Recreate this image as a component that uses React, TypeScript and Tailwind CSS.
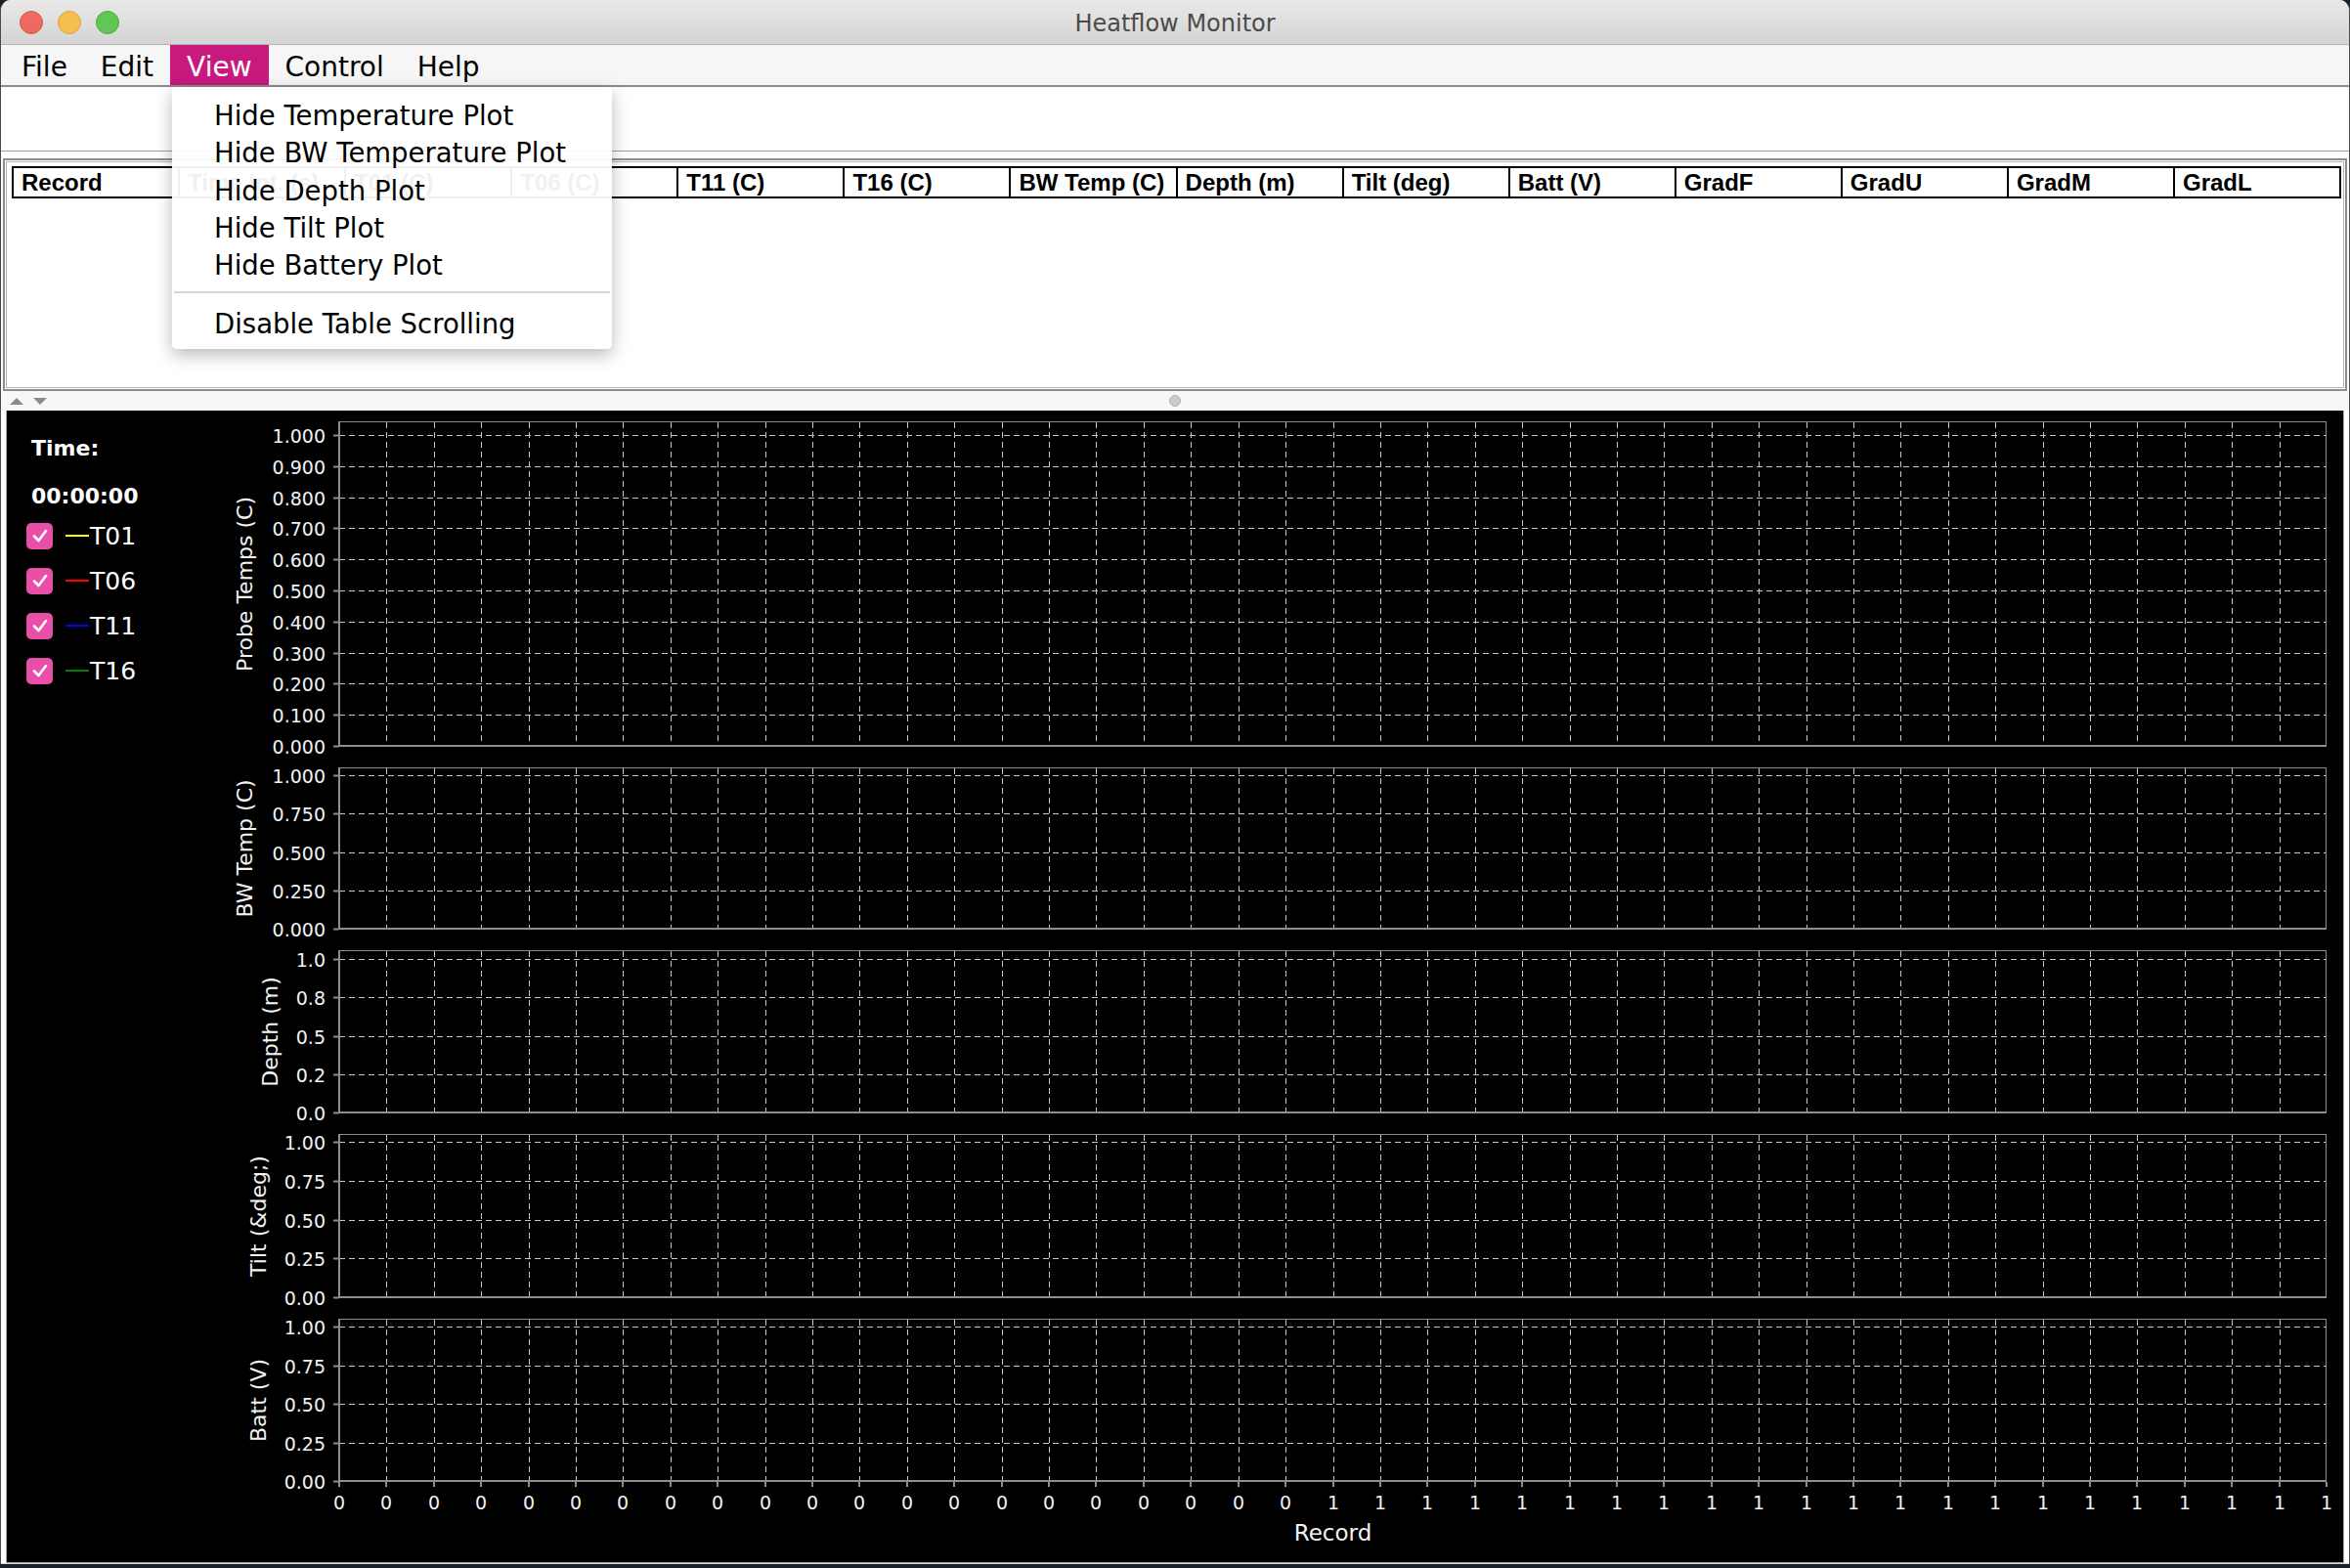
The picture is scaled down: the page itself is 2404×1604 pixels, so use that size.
import React from 'react';

// chart geometry (svg coords, chart column starts at x=207 on the page)
const W = 2190;
const PL = 140;
const PR = 2173;
const N = 42;
const STEP = (PR - PL) / N;
const GRID = '#c6c6c6';
const AXIS = '#8e8e8e';
const LABEL = '#f2f2f2';

type PlotDef = { title: string; titleX: number; h: number; pad: number; ticks: string[] };

const plots: PlotDef[] = [
  {
    title: 'Probe Temps (C)',
    titleX: 43,
    h: 333,
    pad: 14,
    ticks: ['1.000', '0.900', '0.800', '0.700', '0.600', '0.500', '0.400', '0.300', '0.200', '0.100', '0.000'],
  },
  { title: 'BW Temp (C)', titleX: 43, h: 166, pad: 8, ticks: ['1.000', '0.750', '0.500', '0.250', '0.000'] },
  { title: 'Depth (m)', titleX: 69, h: 167, pad: 9, ticks: ['1.0', '0.8', '0.5', '0.2', '0.0'] },
  { title: 'Tilt (&deg;)', titleX: 57, h: 168, pad: 8, ticks: ['1.00', '0.75', '0.50', '0.25', '0.00'] },
  { title: 'Batt (V)', titleX: 57, h: 167, pad: 8, ticks: ['1.00', '0.75', '0.50', '0.25', '0.00'] },
];

const columns = [
  'Record', 'Time Int. (s)', 'T01 (C)', 'T06 (C)', 'T11 (C)', 'T16 (C)', 'BW Temp (C)',
  'Depth (m)', 'Tilt (deg)', 'Batt (V)', 'GradF', 'GradU', 'GradM', 'GradL',
];

const series = [
  { name: 'T01', line: 'bg-[#ffff00]' },
  { name: 'T06', line: 'bg-[#ff0000]' },
  { name: 'T11', line: 'bg-[#0000ff]' },
  { name: 'T16', line: 'bg-[#008000]' },
];

const menus = ['File', 'Edit', 'View', 'Control', 'Help'];
const viewItems = ['Hide Temperature Plot', 'Hide BW Temperature Plot', 'Hide Depth Plot', 'Hide Tilt Plot', 'Hide Battery Plot'];

function Plot({ p }: { p: PlotDef }) {
  const base = p.h - 1;
  const gap = (base - p.pad) / (p.ticks.length - 1);
  const xs = Array.from({ length: N - 1 }, (_, i) => Math.round(PL + (i + 1) * STEP) + 0.5);
  return (
    <svg width={W} height={p.h} className="block overflow-visible" fontFamily="DejaVu Sans, sans-serif">
      {xs.map((x) => (
        <line key={x} x1={x} x2={x} y1={1} y2={base} stroke={GRID} strokeDasharray="6 4" />
      ))}
      {p.ticks.map((t, i) => {
        const y = Math.round(p.pad + i * gap) + 0.5;
        return (
          <g key={t}>
            {i < p.ticks.length - 1 && (
              <line x1={PL} x2={PR} y1={y} y2={y} stroke={GRID} strokeDasharray="6 4" />
            )}
            <line x1={PL - 6} x2={PL} y1={y} y2={y} stroke={AXIS} strokeWidth={2} />
            <text x={PL - 14} y={y} textAnchor="end" dominantBaseline="central" fill={LABEL} fontSize={19}>
              {t}
            </text>
          </g>
        );
      })}
      <line x1={PL} x2={PR} y1={0.5} y2={0.5} stroke={AXIS} />
      <line x1={PR - 0.5} x2={PR - 0.5} y1={0} y2={base} stroke={AXIS} />
      <line x1={PL} x2={PL} y1={0} y2={base + 1} stroke={AXIS} strokeWidth={2} />
      <line x1={PL} x2={PR} y1={base} y2={base} stroke={AXIS} strokeWidth={2} />
      <text
        transform={`translate(${p.titleX} ${p.h / 2}) rotate(-90)`}
        textAnchor="middle"
        dominantBaseline="central"
        fontSize={22}
        fill={LABEL}
      >
        {p.title}
      </text>
    </svg>
  );
}

function XAxis() {
  const ticks = Array.from({ length: N + 1 }, (_, i) => i);
  return (
    <svg width={W} height={82} className="block" fontFamily="DejaVu Sans, sans-serif">
      {ticks.map((i) => {
        const x = Math.round(PL + i * STEP);
        return (
          <g key={i}>
            <line x1={x} x2={x} y1={0} y2={5} stroke={AXIS} strokeWidth={2} />
            <text x={x} y={21} textAnchor="middle" dominantBaseline="central" fill={LABEL} fontSize={19}>
              {i < 21 ? '0' : '1'}
            </text>
          </g>
        );
      })}
      <text x={(PL + PR) / 2} y={52} textAnchor="middle" dominantBaseline="central" fill={LABEL} fontSize={23}>
        Record
      </text>
    </svg>
  );
}

export default function App() {
  return (
    <div className="w-[2404px] h-[1604px] bg-[#1a2228] overflow-hidden">
      <div className="relative w-[2404px] h-[1600px] flex flex-col rounded-t-[11px] overflow-hidden border-x border-[#4a4a4a] bg-[#d9d9d9] pb-[2px] font-['DejaVu_Sans',sans-serif]">
        {/* title bar */}
        <div className="h-[46px] shrink-0 grid grid-cols-[1fr_auto_1fr] items-center bg-linear-to-b from-[#e9e9e9] to-[#d4d4d4] border-b border-[#b4b4b4]">
          <div className="flex items-center gap-[15px] pl-[19px]">
            <span className="w-[24px] h-[24px] rounded-full bg-[#ee6a5f] border border-[#d3574c]" />
            <span className="w-[24px] h-[24px] rounded-full bg-[#f5be4f] border border-[#d8a23d]" />
            <span className="w-[24px] h-[24px] rounded-full bg-[#62c655] border border-[#50a843]" />
          </div>
          <div className="pt-[2px] text-[24px] text-[#4b4b4b]">Heatflow Monitor</div>
          <div />
        </div>

        {/* menu bar */}
        <div className="h-[43px] shrink-0 flex bg-[#f6f6f6] border-b-2 border-[#8c8c8c] pl-[4px] text-[28px] text-black">
          {menus.map((m) => (
            <div
              key={m}
              className={`px-[17px] pt-[4px] flex items-center ${m === 'View' ? 'bg-[#c8197f] text-white' : ''}`}
            >
              {m}
            </div>
          ))}
        </div>

        {/* tool strip */}
        <div className="h-[65px] shrink-0 bg-white" />

        {/* split pane */}
        <div className="flex-1 flex flex-col bg-white border-t border-[#9c9c9c] pt-[7px]">
          <div className="h-[238px] shrink-0 mx-[2px] border-2 border-[#8c8c8c] p-[1px]">
            <div className="h-full border border-[#b4b4b4] bg-white pt-[4px] pl-[5px] pr-[2px]">
              <div className="flex h-[33px] border-2 border-black bg-white font-['Liberation_Sans',Arial,sans-serif] text-[24px] font-bold text-black">
                {columns.map((c, i) => (
                  <div
                    key={c}
                    className={`flex-1 min-w-0 overflow-hidden whitespace-nowrap pl-[8px] leading-[29px] ${
                      i ? 'border-l-2 border-black' : ''
                    }`}
                  >
                    {c}
                  </div>
                ))}
              </div>
            </div>
          </div>

          {/* divider */}
          <div className="h-[20px] shrink-0 grid grid-cols-[1fr_auto_1fr] items-center bg-[#f7f7f7]">
            <div className="flex items-center gap-[10px] pl-[9px]">
              <span className="w-0 h-0 border-x-[7px] border-x-transparent border-b-[7px] border-b-[#8a8a8a]" />
              <span className="w-0 h-0 border-x-[7px] border-x-transparent border-t-[7px] border-t-[#8a8a8a]" />
            </div>
            <span className="w-[12px] h-[12px] rounded-full bg-[#cacaca] border border-[#b2b2b2]" />
            <div />
          </div>

          {/* plot panel */}
          <div className="flex-1 flex mx-[5px] bg-black border-x border-b border-[#a8a8a8]">
            <div className="w-[200px] shrink-0 pl-[20px] pt-[26px] text-white">
              <div className="pl-[5px] text-[22px] font-bold leading-[26px]">Time:</div>
              <div className="pl-[5px] mt-[23px] text-[22px] font-bold leading-[26px]">00:00:00</div>
              <div className="mt-[4px] flex flex-col">
                {series.map((s) => (
                  <div key={s.name} className="h-[46px] flex items-center">
                    <span className="w-[27px] h-[27px] rounded-[5px] bg-[#e84fa9] flex items-center justify-center">
                      <svg width="18" height="18" viewBox="0 0 18 18">
                        <path d="M3 9.5 L7.5 14 L15 4" fill="none" stroke="white" strokeWidth="2.6" strokeLinecap="round" strokeLinejoin="round" />
                      </svg>
                    </span>
                    <span className={`ml-[13px] w-[24px] h-[2px] ${s.line}`} />
                    <span className="ml-[1px] text-[25px] leading-none">{s.name}</span>
                  </div>
                ))}
              </div>
            </div>
            <div className="flex-1 flex flex-col pt-[11px] gap-[21px]">
              {plots.map((p) => (
                <Plot key={p.title} p={p} />
              ))}
              <div className="-mt-[21px]">
                <XAxis />
              </div>
            </div>
          </div>
        </div>

        {/* open View menu */}
        <div className="absolute left-[175px] top-[89px] w-[450px] bg-white/[0.94] rounded-b-[5px] shadow-[0_6px_18px_rgba(0,0,0,0.28)] pt-[10px] pb-[6px] text-[27.5px] text-black">
          {viewItems.map((it) => (
            <div key={it} className="pl-[43px] leading-[38.3px] whitespace-nowrap">
              {it}
            </div>
          ))}
          <div className="mt-[8px] mx-[2px] h-[2px] bg-[#d6d6d6]" />
          <div className="mt-[12px] pl-[43px] leading-[38.3px] whitespace-nowrap">Disable Table Scrolling</div>
        </div>
      </div>
    </div>
  );
}
